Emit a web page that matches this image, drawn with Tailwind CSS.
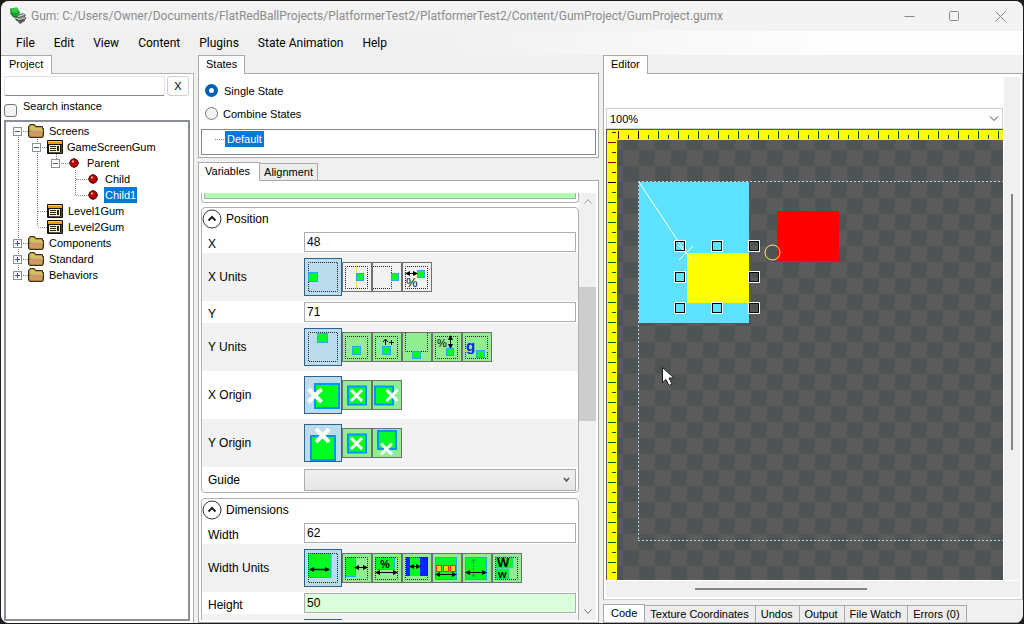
<!DOCTYPE html>
<html lang="en">
<head>
<meta charset="utf-8">
<title>Gum</title>
<script src="https://cdn.jsdelivr.net/npm/@tailwindcss/browser@4"></script>
</head>
<body class="h-screen overflow-hidden bg-[#1c1a1e] p-px font-['Liberation_Sans',sans-serif] text-[11px] leading-4 text-black">
<svg class="absolute size-0" aria-hidden="true">
  <defs>
    <symbol id="folder" viewBox="0 0 16 14">
      <path d="M.5 2.5 2 .5h4.500l1.500 2h6.500v2h1V12l-1 1.500H1.500L.5 12z" fill="#8a6a2c" stroke="#3f2f12"/>
      <path d="M1.500 3.500 2.500 1.500H6l1.500 2H14V6H1.500z" fill="#cfc455"/>
      <path d="M1.500 12V7.500L3 5.500h12L14 12.500H2z" fill="#cd9a63"/>
      <path d="M3 6h11.500" stroke="#e6c08c"/>
    </symbol>
    <symbol id="screen" viewBox="0 0 16 14">
      <rect width="16" height="14" rx="1" fill="#14120a"/>
      <path d="M1 1h14v1H1z" fill="#ffc45a"/><path d="M1 2h14v2H1z" fill="#f59a00"/>
      <path d="M2 5h11v7H2z" fill="#f2efcf"/>
      <path d="M3 6.500h6M3 8.500h6M3 10.500h6" stroke="#2b2810"/><path d="M11 6v5" stroke="#2b2810" stroke-width="2"/>
      <path d="M14.500 5v8M2 12.500h12" stroke="#55534a"/>
    </symbol>
    <symbol id="gem" viewBox="0 0 10 10">
      <path d="M5 .5 8 2l1.500 3L8 8 5 9.500 2 8 .5 5 2 2z" fill="#b80000" stroke="#4a0000"/>
      <circle cx="4" cy="3.500" r="1.200" fill="#ff9a9a"/>
    </symbol>
    <symbol id="minus" viewBox="0 0 9 9"><rect x=".5" y=".5" width="8" height="8" fill="#fff" stroke="#919191"/><path d="M2 4.500h5" stroke="#3a4fa0"/></symbol>
    <symbol id="plus" viewBox="0 0 9 9"><rect x=".5" y=".5" width="8" height="8" fill="#fff" stroke="#919191"/><path d="M2 4.500h5M4.500 2v5" stroke="#3a4fa0"/></symbol>
    <symbol id="expander" viewBox="0 0 20 20"><circle cx="10" cy="10" r="9" fill="#fff" stroke="#333"/><path d="m6.500 11.500 3.500-3.500 3.500 3.500" fill="none" stroke="#222" stroke-width="2"/></symbol>
    <marker id="tip" markerWidth="5" markerHeight="5" refX="4" refY="2.500" orient="auto-start-reverse" markerUnits="userSpaceOnUse"><path d="M0 0 5 2.500 0 5z" fill="#000"/></marker>
  </defs>
</svg>

<div class="flex h-full flex-col overflow-hidden rounded-lg bg-[#f0f0f0]">
  <header class="flex h-[30px] shrink-0 items-center bg-[#f3f3f3] pl-2">
    <svg class="size-[18px] shrink-0" viewBox="0 0 18 18" aria-hidden="true">
      <path d="M1 1.500 8 .5l3 5-2 5-4.500-.5L1.500 6z" fill="#17a02c"/>
      <path d="m1 1.500 7-1 2 4-5.500 1.500z" fill="#35c84a"/><path d="m1.500 6 3 4 4.500.5" fill="none" stroke="#0b5a18"/>
      <path d="m8 8 6-2 3 2-1 2-7 2z" fill="#6b7370"/><path d="m6.500 11 2 1.500 8-2.500.5 2-7 3-3.500-2z" fill="#2d3331"/>
      <path d="m9 9.500 6-2M9 13l7-2" stroke="#dfe5e2"/><path d="m9 15 7-3v2l-5 3z" fill="#59615e"/>
    </svg>
    <h1 class="ml-1 flex-1 truncate font-['Roboto',sans-serif] text-[12px] text-[#8b8b8b]">Gum: C:/Users/Owner/Documents/FlatRedBallProjects/PlatformerTest2/PlatformerTest2/Content/GumProject/GumProject.gumx</h1>
    <button class="flex h-full w-[46px] items-center justify-center" aria-label="Minimize"><svg class="size-[11px]" viewBox="0 0 11 11"><path d="M.5 5.500h10" stroke="#888"/></svg></button>
    <button class="flex h-full w-[45px] items-center justify-center" aria-label="Maximize"><svg class="size-[11px]" viewBox="0 0 11 11"><rect x=".5" y=".5" width="9" height="9" rx="1" fill="none" stroke="#888"/></svg></button>
    <button class="flex h-full w-[46px] items-center justify-center" aria-label="Close"><svg class="size-[11px]" viewBox="0 0 11 11"><path d="m.5.5 10 10m0-10-10 10" stroke="#888"/></svg></button>
  </header>

  <nav class="flex h-6 shrink-0 items-center gap-[19px] bg-linear-to-r from-[#f0f0f0] from-40% to-[#fdfdfd] to-80% pl-[15px] font-['Roboto',sans-serif] text-[12px]">
    <button>File</button><button>Edit</button><button>View</button><button>Content</button><button>Plugins</button><button>State Animation</button><button>Help</button>
  </nav>

  <main class="flex min-h-0 flex-1 gap-1">
    <!-- Project tree -->
    <section class="flex w-[193px] shrink-0 flex-col">
      <div class="relative z-10 -mb-px flex"><button class="h-[19px] border border-b-0 border-l-0 border-[#a9a9a9] bg-white pr-2 pl-2 pb-[3px]">Project</button></div>
      <div class="flex min-h-0 flex-1 flex-col border-t border-r border-[#b4b4b4] bg-white pt-[2px] pr-[3px] pb-[2px] pl-[3px]">
        <div class="flex gap-[2px] pr-px">
          <input aria-label="Search" class="h-5 min-w-0 flex-1 rounded-[2px] border border-[#e4e4e4] border-b-[#868686] bg-white px-1">
          <button class="h-5 w-[22px] rounded-[3px] border border-[#cfcfcf] bg-white">X</button>
        </div>
        <label class="flex h-6 items-center"><input type="checkbox" class="mt-1 size-[13px] appearance-none rounded-[3px] border border-[#777] bg-[#f3f3f3]"><span class="-mt-1 ml-[6px]">Search instance</span></label>
        <div class="relative min-h-0 flex-1 border-2 border-[#8b9098] bg-white pt-px pl-[7px]">
          <svg class="absolute top-0 left-px h-[170px] w-[90px]" aria-hidden="true"><path d="M11.500 9v144M16 9.500h6M16 121.500h6M16 137.500h6M16 153.500h6M30.500 15v90M35 25.500h6M31 89.500h10M31 105.500h10M49.500 32v8M54 41.500h8M68.500 48v26M69 57.500h12M69 73.500h12" stroke="#808080" stroke-dasharray="1 1" fill="none"/></svg>
          <ul class="relative">
            <li class="flex h-4 items-center"><svg class="size-[9px]"><use href="#minus"/></svg><svg class="ml-[6px] h-[14px] w-4"><use href="#folder"/></svg><span class="ml-[5px]">Screens</span></li>
            <li class="flex h-4 items-center pl-[19px]"><svg class="size-[9px]"><use href="#minus"/></svg><svg class="ml-[6px] h-[14px] w-4"><use href="#screen"/></svg><span class="ml-1">GameScreenGum</span></li>
            <li class="flex h-4 items-center pl-[38px]"><svg class="size-[9px]"><use href="#minus"/></svg><svg class="ml-[9px] size-[10px]"><use href="#gem"/></svg><span class="ml-2">Parent</span></li>
            <li class="flex h-4 items-center pl-[75px]"><svg class="size-[10px]"><use href="#gem"/></svg><span class="ml-[7px]">Child</span></li>
            <li class="flex h-4 items-center pl-[75px]"><svg class="size-[10px]"><use href="#gem"/></svg><span class="ml-[6px] bg-[#0078d7] px-px text-white">Child1</span></li>
            <li class="flex h-4 items-center pl-[34px]"><svg class="h-[14px] w-4"><use href="#screen"/></svg><span class="ml-[5px]">Level1Gum</span></li>
            <li class="flex h-4 items-center pl-[34px]"><svg class="h-[14px] w-4"><use href="#screen"/></svg><span class="ml-[5px]">Level2Gum</span></li>
            <li class="flex h-4 items-center"><svg class="size-[9px]"><use href="#plus"/></svg><svg class="ml-[6px] h-[14px] w-4"><use href="#folder"/></svg><span class="ml-[5px]">Components</span></li>
            <li class="flex h-4 items-center"><svg class="size-[9px]"><use href="#plus"/></svg><svg class="ml-[6px] h-[14px] w-4"><use href="#folder"/></svg><span class="ml-[5px]">Standard</span></li>
            <li class="flex h-4 items-center"><svg class="size-[9px]"><use href="#plus"/></svg><svg class="ml-[6px] h-[14px] w-4"><use href="#folder"/></svg><span class="ml-[5px]">Behaviors</span></li>
          </ul>
        </div>
      </div>
    </section>

    <!-- States and variables -->
    <section class="flex w-[401px] shrink-0 flex-col">
      <div class="relative z-10 -mb-px flex"><button class="h-[19px] border border-b-0 border-[#a9a9a9] bg-white px-[7px] pb-[3px]">States</button></div>
      <div class="border border-[#a9a9a9] bg-white px-[2px] pt-[5px] pb-[2px]">
        <label class="flex h-[23px] items-center gap-[6px] pl-1"><input type="radio" name="mode" checked class="size-[13px] appearance-none rounded-full border-4 border-[#005fb8] bg-white">Single State</label>
        <label class="flex h-[23px] items-center gap-[5px] pl-1"><input type="radio" name="mode" class="size-[13px] appearance-none rounded-full border border-[#777] bg-[#f3f3f3]">Combine States</label>
        <div class="mt-1 flex h-[26px] items-start border border-[#828790] pt-px pl-[13px]"><span class="mt-2 w-[9px] border-t border-dotted border-[#808080]"></span><span class="ml-px bg-[#0078d7] px-[2px] text-white">Default</span></div>
      </div>
      <div class="relative z-10 mt-1 -mb-px flex items-end">
        <button class="h-[19px] border border-b-0 border-[#a9a9a9] bg-white pr-[9px] pb-[3px] pl-[6px]">Variables</button>
        <button class="-ml-px mb-px h-[17px] border border-b-0 border-[#a9a9a9] bg-[#ededed] px-1">Alignment</button>
      </div>
      <div class="flex min-h-0 flex-1 border border-[#a9a9a9] bg-white pt-3 pr-[2px] pb-[2px] pl-[2px]">
        <div class="flex min-h-0 flex-1 flex-col overflow-hidden text-[12px]">
          <div class="h-[10px] shrink-0 rounded-b border border-t-0 border-[#b0b0b0] bg-white px-[2px]"><div class="h-[6px] border border-t-0 border-[#a9a9a9] bg-[#b0ffb0]"></div></div>

          <div class="mt-1 shrink-0 rounded border border-[#b0b0b0] bg-white">
            <h2 class="flex h-[23px] items-center gap-1 pb-[2px]"><button aria-label="Collapse Position" class="size-5"><svg class="size-5"><use href="#expander"/></svg></button>Position</h2>
            <div class="flex h-[22px] items-center px-[2px] pl-[6px]"><label for="x" class="w-24 pt-1">X</label><input id="x" value="48" class="h-5 min-w-0 flex-1 border border-[#abadb3] bg-white px-[2px]"></div>
            <div class="flex h-12 items-center bg-[#f2f2f2] pl-[6px]"><span class="w-24">X Units</span>
              <button aria-label="Pixels from left" class="border border-[#2c628b] bg-[#bcdcee]"><svg class="size-9" viewBox="1 1 36 36"><rect x="4.500" y="4.500" width="29" height="29" fill="none" stroke="#222" stroke-dasharray="1 1" stroke-dashoffset=".5"/><rect x="4.500" y="14.500" width="9" height="9" fill="#00ff21" stroke="#2ba5ff"/></svg></button>
              <button aria-label="Pixels from center" class="border border-[#707070]"><svg class="size-7" viewBox="1 1 28 28"><rect x="3.500" y="4.500" width="22" height="22" fill="none" stroke="#222" stroke-dasharray="1 1" stroke-dashoffset=".5"/><path d="M14.500 3v24" stroke="#ffd34d"/><rect x="14.500" y="11.500" width="7" height="7" fill="#00ff21" stroke="#2ba5ff"/></svg></button>
              <button aria-label="Pixels from right" class="border border-[#707070]"><svg class="size-7" viewBox="1 1 28 28"><path d="M1 4.500h18.500v22H1" fill="none" stroke="#222" stroke-dasharray="1 1"/><rect x="19.500" y="11.500" width="7" height="7" fill="#00ff21" stroke="#2ba5ff"/></svg></button>
              <button aria-label="Percentage of width" class="border border-[#707070]"><svg class="size-7" viewBox="1 1 28 28"><rect x="3.500" y="4.500" width="22" height="22" fill="none" stroke="#222" stroke-dasharray="1 1" stroke-dashoffset=".5"/><path d="M4 11.500h11" stroke="#000" marker-start="url(#tip)" marker-end="url(#tip)"/><rect x="15.500" y="8.500" width="7" height="7" fill="#00ff21" stroke="#2ba5ff"/><text x="4" y="25" font-size="13">%</text></svg></button>
            </div>
            <div class="flex h-[22px] items-center px-[2px] pl-[6px]"><label for="y" class="w-24 pt-1">Y</label><input id="y" value="71" class="h-5 min-w-0 flex-1 border border-[#abadb3] bg-white px-[2px]"></div>
            <div class="flex h-12 items-center bg-[#f2f2f2] pl-[6px]"><span class="w-24">Y Units</span>
              <button aria-label="Pixels from top" class="border border-[#2c628b] bg-[#bcdcee]"><svg class="size-9" viewBox="1 1 36 36"><rect x="4.500" y="4.500" width="29" height="29" fill="none" stroke="#222" stroke-dasharray="1 1" stroke-dashoffset=".5"/><rect x="13.500" y="5.500" width="10" height="9" fill="#00ff21" stroke="#2ba5ff"/></svg></button>
              <button aria-label="Pixels from middle" class="border border-[#707070] bg-[#90ee90]"><svg class="size-7" viewBox="1 1 28 28"><rect x="3.500" y="4.500" width="22" height="22" fill="none" stroke="#222" stroke-dasharray="1 1" stroke-dashoffset=".5"/><path d="M3 15.500h24" stroke="#d5dc60"/><rect x="10.500" y="14.500" width="8" height="8" fill="#00ff21" stroke="#2ba5ff"/></svg></button>
              <button aria-label="Pixels from middle, inverted" class="border border-[#707070] bg-[#90ee90]"><svg class="size-7" viewBox="1 1 28 28"><rect x="3.500" y="4.500" width="22" height="22" fill="none" stroke="#222" stroke-dasharray="1 1" stroke-dashoffset=".5"/><path d="M3 15.500h24" stroke="#d5dc60"/><rect x="10.500" y="14.500" width="8" height="8" fill="#00ff21" stroke="#2ba5ff"/><path d="M13.500 13V7.500m-2.500 2.500 2.500-3 2.500 3M17 10.500h5M19.500 8v5" fill="none" stroke="#000"/></svg></button>
              <button aria-label="Pixels from bottom" class="border border-[#707070] bg-[#90ee90]"><svg class="size-7" viewBox="1 1 28 28"><path d="M3.500 1v18.500h22V1" fill="none" stroke="#222" stroke-dasharray="1 1"/><rect x="10.500" y="19.500" width="8" height="7" fill="#00ff21" stroke="#2ba5ff"/></svg></button>
              <button aria-label="Percentage of height" class="border border-[#707070] bg-[#90ee90]"><svg class="size-7" viewBox="1 1 28 28"><rect x="3.500" y="4.500" width="22" height="22" fill="none" stroke="#222" stroke-dasharray="1 1" stroke-dashoffset=".5"/><path d="M18.500 4v12" stroke="#000" marker-start="url(#tip)" marker-end="url(#tip)"/><rect x="14.500" y="16.500" width="7" height="7" fill="#00ff21" stroke="#2ba5ff"/><text x="5" y="15" font-size="11">%</text></svg></button>
              <button aria-label="Pixels from baseline" class="border border-[#707070] bg-[#90ee90]"><svg class="size-7" viewBox="1 1 28 28"><rect x="3.500" y="4.500" width="22" height="22" fill="none" stroke="#222" stroke-dasharray="1 1" stroke-dashoffset=".5"/><path d="M2 18.500h25" stroke="#d5c840"/><text x="4" y="19" font-size="15" font-weight="bold" fill="#0026ff">g</text><rect x="14.500" y="18.500" width="8" height="7" fill="#00ff21" stroke="#2ba5ff"/></svg></button>
            </div>
            <div class="flex h-12 items-center pl-[6px]"><span class="w-24">X Origin</span>
              <button aria-label="Left" class="border border-[#2c628b] bg-[#bcdcee]"><svg class="size-9" viewBox="1 1 36 36"><rect x="11" y="8" width="24" height="24" fill="#00ff21" stroke="#0094ff" stroke-width="2"/><path d="m4.500 13 13 13m0-13-13 13" stroke="#fff" stroke-width="4"/></svg></button>
              <button aria-label="Center" class="border border-[#707070] bg-[#90ee90]"><svg class="size-7" viewBox="1 1 28 28"><rect x="6" y="6.500" width="18" height="18" fill="#00ff21" stroke="#0094ff" stroke-width="2"/><path d="m9 10 11 11m0-11L9 21" stroke="#fff" stroke-width="3"/></svg></button>
              <button aria-label="Right" class="border border-[#707070] bg-[#90ee90]"><svg class="size-7" viewBox="1 1 28 28"><rect x="3" y="6.500" width="18" height="18" fill="#00ff21" stroke="#0094ff" stroke-width="2"/><path d="m14.500 10 11 11m0-11-11 11" stroke="#fff" stroke-width="3"/></svg></button>
            </div>
            <div class="flex h-12 items-center bg-[#f2f2f2] pl-[6px]"><span class="w-24">Y Origin</span>
              <button aria-label="Top" class="border border-[#2c628b] bg-[#bcdcee]"><svg class="size-9" viewBox="1 1 36 36"><rect x="7" y="12" width="24" height="24" fill="#00ff21" stroke="#0094ff" stroke-width="2"/><path d="m12 5 13 13m0-13L12 18" stroke="#fff" stroke-width="4"/></svg></button>
              <button aria-label="Middle" class="border border-[#707070] bg-[#90ee90]"><svg class="size-7" viewBox="1 1 28 28"><rect x="6" y="6.500" width="18" height="18" fill="#00ff21" stroke="#0094ff" stroke-width="2"/><path d="m9 10 11 11m0-11L9 21" stroke="#fff" stroke-width="3"/></svg></button>
              <button aria-label="Bottom" class="border border-[#707070] bg-[#90ee90]"><svg class="size-7" viewBox="1 1 28 28"><rect x="6" y="3" width="18" height="18" fill="#00ff21" stroke="#0094ff" stroke-width="2"/><path d="m9 15.500 11 11m0-11-11 11" stroke="#fff" stroke-width="3"/></svg></button>
            </div>
            <div class="flex h-[25px] items-center px-[2px] pl-[6px]"><label for="guide" class="w-24 pt-px">Guide</label>
              <div class="relative h-[22px] min-w-0 flex-1"><select id="guide" class="block h-full w-full appearance-none border border-[#acacac] bg-linear-to-b from-[#f0f0f0] to-[#e5e5e5]"><option></option></select><svg class="pointer-events-none absolute top-2 right-[6px] h-[6px] w-[7px]" viewBox="0 0 7 6"><path d="m1 1 2.500 3L6 1" fill="none" stroke="#555" stroke-width="1.500"/></svg></div></div>
          </div>

          <div class="mt-[5px] shrink-0 rounded border border-[#b0b0b0] bg-white">
            <h2 class="flex h-[23px] items-center gap-1 pb-[2px]"><button aria-label="Collapse Dimensions" class="size-5"><svg class="size-5"><use href="#expander"/></svg></button>Dimensions</h2>
            <div class="flex h-[22px] items-center px-[2px] pl-[6px]"><label for="w" class="w-24 pt-1">Width</label><input id="w" value="62" class="h-5 min-w-0 flex-1 border border-[#abadb3] bg-white px-[2px]"></div>
            <div class="flex h-12 items-center bg-[#f2f2f2] pl-[6px]"><span class="w-24">Width Units</span>
              <button aria-label="Absolute" class="border border-[#2c628b] bg-[#bcdcee]"><svg class="size-9" viewBox="1 1 36 36"><path d="M4 4h23v24H4z" fill="#00ff21"/><path d="M27 4v24.500H4" fill="none" stroke="#2ba5ff"/><rect x="4.500" y="4.500" width="29" height="29" fill="none" stroke="#222" stroke-dasharray="1 1" stroke-dashoffset=".5"/><path d="M6 20.500h19" stroke="#000" stroke-width="1.500" marker-start="url(#tip)" marker-end="url(#tip)"/></svg></button>
              <button aria-label="Relative to parent" class="border border-[#707070] bg-[#90ee90]"><svg class="size-7" viewBox="1 1 28 28"><rect x="3.500" y="4.500" width="10" height="19" fill="#00ff21" stroke="#2ba5ff"/><rect x="3.500" y="4.500" width="22" height="22" fill="none" stroke="#222" stroke-dasharray="1 1" stroke-dashoffset=".5"/><path d="M13 14.500h12" stroke="#000" marker-start="url(#tip)" marker-end="url(#tip)"/></svg></button>
              <button aria-label="Percentage of parent" class="border border-[#707070] bg-[#90ee90]"><svg class="size-7" viewBox="1 1 28 28"><rect x="3.500" y="4.500" width="19" height="12" fill="#00ff21" stroke="#2ba5ff"/><rect x="3.500" y="4.500" width="22" height="22" fill="none" stroke="#222" stroke-dasharray="1 1" stroke-dashoffset=".5"/><path d="M4 19.500h21" stroke="#000" marker-start="url(#tip)" marker-end="url(#tip)"/><text x="8" y="15" font-size="11" font-weight="bold">%</text></svg></button>
              <button aria-label="Ratio of container" class="border border-[#707070] bg-[#90ee90]"><svg class="size-7" viewBox="1 1 28 28"><path d="M4 4h22v19H4z" fill="#0026ff"/><path d="M8 4h10v19H8z" fill="#00ff21"/><rect x="3.500" y="4.500" width="22" height="22" fill="none" stroke="#222" stroke-dasharray="1 1" stroke-dashoffset=".5"/><path d="M8 13.500h10" stroke="#000" marker-start="url(#tip)" marker-end="url(#tip)"/></svg></button>
              <button aria-label="Relative to children" class="border border-[#707070] bg-[#90ee90]"><svg class="size-7" viewBox="1 1 28 28"><rect x="3.500" y="4.500" width="21" height="22" fill="#00ff21" stroke="#2ba5ff"/><path d="M4.500 12.500h5v6h-5zM11.500 12.500h5v6h-5zM18.500 12.500h5v6h-5z" fill="#ffd800" stroke="#f22"/><path d="M4 21.500h20" stroke="#000" marker-start="url(#tip)" marker-end="url(#tip)"/></svg></button>
              <button aria-label="Maintain aspect ratio" class="border border-[#707070] bg-[#90ee90]"><svg class="size-7" viewBox="1 1 28 28"><rect x="3.500" y="4.500" width="21" height="22" fill="#00ff21" stroke="#2ba5ff"/><path d="M11.500 6v18m-2-15 2-3 2 3m-4 12 2 3 2-3" fill="none" stroke="#0a9c1e" stroke-dasharray="2 1"/><path d="M4 19.500h20" stroke="#000" marker-start="url(#tip)" marker-end="url(#tip)"/></svg></button>
              <button aria-label="Percentage of source" class="border border-[#707070] bg-[#90ee90]"><svg class="size-7" viewBox="1 1 28 28"><path d="M4 4h17v11H4zM4 16h13v10H4z" fill="#00ff21" stroke="#2ba5ff" stroke-width=".5"/><rect x="3.500" y="4.500" width="22" height="22" fill="none" stroke="#222" stroke-dasharray="1 1" stroke-dashoffset=".5"/><text x="5" y="14" font-size="13" font-weight="bold">W</text><text x="6" y="25" font-size="11" font-weight="bold">w</text></svg></button>
            </div>
            <div class="flex h-[22px] items-center px-[2px] pl-[6px]"><label for="h" class="w-24 pt-1">Height</label><input id="h" value="50" class="h-5 min-w-0 flex-1 border border-[#abadb3] bg-[#dbffdb] px-[2px]"></div>
            <div class="flex h-12 items-center bg-[#f2f2f2] pl-[102px]"><button aria-label="Absolute height" class="size-[38px] border border-[#2c628b] bg-[#bcdcee]"></button></div>
          </div>
        </div>
        <div class="flex w-[17px] shrink-0 flex-col items-center bg-[#f0f0f0] py-[6px]" aria-hidden="true">
          <svg class="h-[5px] w-2 shrink-0" viewBox="0 0 8 5"><path d="m.5 4.500 3.500-4 3.500 4" fill="none" stroke="#999"/></svg>
          <div class="grow-[83]"></div><div class="w-full grow-[133] bg-[#cdcdcd]"></div><div class="grow-[188]"></div>
          <svg class="h-[5px] w-2 shrink-0" viewBox="0 0 8 5"><path d="m.5.5 3.500 4 3.500-4" fill="none" stroke="#777"/></svg>
        </div>
      </div>
    </section>

    <!-- Editor -->
    <section class="flex min-w-0 flex-1 flex-col">
      <div class="relative z-10 -mb-px flex"><button class="h-[19px] border border-b-0 border-[#a9a9a9] bg-white px-[7px] pb-[3px]">Editor</button></div>
      <div class="flex min-h-0 flex-1 flex-col border border-[#a9a9a9] border-b-[#d0d0d0] bg-white pt-[3px] pr-[2px] pb-[2px] pl-[2px]">
        <div class="flex min-h-0 flex-1">
          <div class="flex min-w-0 flex-1 flex-col pt-[31px]">
            <div class="relative h-[21px] shrink-0"><select aria-label="Zoom" class="block h-full w-full appearance-none border border-[#d0d0d0] bg-[#fdfdfd] px-[3px]"><option>100%</option></select><svg class="pointer-events-none absolute top-2 right-1 h-[6px] w-[10px]" viewBox="0 0 10 6"><path d="m1 .5 4 4 4-4" fill="none" stroke="#444"/></svg></div>
            <svg class="min-h-0 w-full flex-1 bg-[#5c5b5b]" shape-rendering="crispEdges" role="img" aria-label="Editing canvas">
              <defs>
                <pattern id="checks" x="1" y="5" width="32" height="32" patternUnits="userSpaceOnUse"><path d="M16 0h16v16H16zM0 16h16v16H0z" fill="#4e5453"/></pattern>
                <pattern id="ticksX" x="32" y="0" width="20" height="12" patternUnits="userSpaceOnUse"><path d="M0 2h1v8H0zM10 6h1v4h-1z" fill="#006400"/></pattern>
                <pattern id="ticksY" x="0" y="53" width="12" height="20" patternUnits="userSpaceOnUse"><path d="M2 0h8v1H2zM6 10h4v1H6z" fill="#006400"/></pattern>
              </defs>
              <rect width="100%" height="100%" fill="url(#checks)"/>
              <path d="M33 53h110v141H33z" fill="#5ce1ff"/>
              <path d="M171 82h62v50h-62z" fill="#f00"/><path d="M81 124h62v50H81z" fill="#ff0"/>
              <g fill="none" stroke="#add8e6" stroke-dasharray="2 2"><line x1="32" y1="52.500" x2="100%" y2="52.500"/><line x1="32" y1="411.500" x2="100%" y2="411.500"/><line x1="32.500" y1="52" x2="32.500" y2="412"/></g>
              <path d="m33 53 47 71M73 131l14-14M72 116l14 14" stroke="#fff" fill="none" shape-rendering="auto"/>
              <g fill="none">
                <path stroke="#fff" d="M68.500 111.500h11v11h-11zM105.500 111.500h11v11h-11zM142.500 111.500h11v11h-11zM68.500 142.500h11v11h-11zM142.500 142.500h11v11h-11zM68.500 173.500h11v11h-11zM105.500 173.500h11v11h-11zM142.500 173.500h11v11h-11z"/>
                <path stroke="#000" d="M69.500 112.500h9v9h-9zM106.500 112.500h9v9h-9zM143.500 112.500h9v9h-9zM69.500 143.500h9v9h-9zM143.500 143.500h9v9h-9zM69.500 174.500h9v9h-9zM106.500 174.500h9v9h-9zM143.500 174.500h9v9h-9z"/>
                <circle cx="166.500" cy="123.500" r="7.500" stroke="#ff0" shape-rendering="auto"/>
              </g>
              <rect width="100%" height="1" fill="#555"/><rect width="1" height="100%" fill="#555"/>
              <rect x="1" y="1" width="100%" height="10" fill="#ff0"/><rect x="1" y="1" width="10" height="100%" fill="#ff0"/>
              <rect x="42" y="0" width="100%" height="11" fill="url(#ticksX)"/>
              <rect x="0" y="63" width="11" height="100%" fill="url(#ticksY)"/>
              <path d="M12 2h1v8h-1zM22 6h1v4h-1zM6 3h4v1H6zM2 13h8v1H2zM6 23h4v1H6zM2 33h8v1H2zM6 43h4v1H6z" fill="#8b0000"/>
              <path d="M32 2h1v8h-1zM2 53h8v1H2z" fill="#000"/>
              <path d="M56.500 238.500v15l3.500-3 3 6 3-1.500-3-6h5z" fill="#fff" stroke="#1a1a1a" shape-rendering="auto"/>
            </svg>
          </div>
          <div class="ml-px flex w-4 flex-col items-center bg-[#f0f0f0]" aria-hidden="true"><div class="grow-[117]"></div><div class="w-[2px] grow-[256] bg-[#858585]"></div><div class="grow-[130]"></div></div>
        </div>
        <div class="mt-px flex h-4 shrink-0 items-center bg-[#f0f0f0]" aria-hidden="true"><div class="grow-[89]"></div><div class="h-[2px] grow-[172] bg-[#858585]"></div><div class="grow-[153]"></div></div>
      </div>
      <div class="mt-1 flex h-[19px] shrink-0 items-end border-b border-[#a9a9a9]">
        <button class="h-[18px] border border-b-0 border-[#a9a9a9] bg-white px-[7px] pb-px">Code</button>
        <button class="h-[17px] border border-b-0 border-l-0 border-[#a9a9a9] bg-[#ededed] pr-[6px] pl-[5px]">Texture Coordinates</button>
        <button class="h-[17px] border border-b-0 border-l-0 border-[#a9a9a9] bg-[#ededed] pr-[6px] pl-[5px]">Undos</button>
        <button class="h-[17px] border border-b-0 border-l-0 border-[#a9a9a9] bg-[#ededed] pr-[6px] pl-[5px]">Output</button>
        <button class="h-[17px] border border-b-0 border-l-0 border-[#a9a9a9] bg-[#ededed] pr-[6px] pl-[5px]">File Watch</button>
        <button class="h-[17px] border border-b-0 border-l-0 border-[#a9a9a9] bg-[#ededed] pr-[6px] pl-[5px]">Errors (0)</button>
      </div>
    </section>
  </main>
</div>
</body>
</html>
